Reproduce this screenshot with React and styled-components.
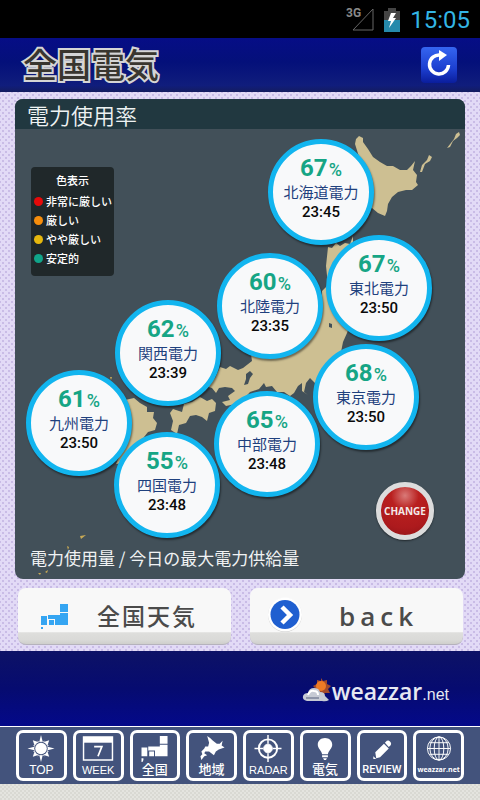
import React from "react";
import styled, { createGlobalStyle } from "styled-components";

const GlobalStyle = createGlobalStyle`
  * { box-sizing: border-box; }
  body {
    margin: 0;
    background: repeating-conic-gradient(#d9d9d3 0 25%, #e4e4df 0 50%) 0 0 / 4px 4px;
    font-family: "Noto Sans CJK JP", sans-serif;
  }
  button { font: inherit; padding: 0; border: 0; cursor: pointer; }
`;

const StatusBar = styled.div`
  display: flex;
  align-items: center;
  justify-content: flex-end;
  height: 38px;
  padding: 2px 10px 0 0;
  background: #000;
  color: #33b5e5;
  font: 24px/36px Roboto, sans-serif;
`;

const SignalIcon = styled.svg`
  width: 28px;
  height: 26px;
  margin-right: 10px;
`;

const BatteryIcon = styled.svg`
  width: 16px;
  height: 24px;
  margin-right: 10px;
`;

const Header = styled.header`
  display: flex;
  align-items: center;
  justify-content: space-between;
  height: 54px;
  padding: 0 23px;
  background: linear-gradient(#060d86, #04107a 45%, #101d7c 88%, #131c60);
`;

const Title = styled.h1`
  margin: 0;
  padding-bottom: 2px;
  color: #39362f;
  font-size: 34px;
  font-weight: 500;
  line-height: 50px;
  -webkit-text-stroke: 4px #d5d5d5;
  paint-order: stroke fill;
`;

const RefreshButton = styled.button`
  width: 36px;
  height: 36px;
  border-radius: 4px;
  background: linear-gradient(#3565f0, #1c3fd0 60%, #0a1d9c);
  svg { display: block; }
`;

const Main = styled.main`
  padding: 7px 15px 6px;
  background:
    radial-gradient(circle, #c9bce6 1px, transparent 1px) 0 0 / 6px 6px,
    radial-gradient(circle, #c9bce6 1px, transparent 1px) 3px 3px / 6px 6px,
    #e2daf6;
`;

const Card = styled.section`
  overflow: hidden;
  border-radius: 8px;
  background: #425059;
`;

const CardTitle = styled.h2`
  margin: 0;
  padding-left: 12px;
  background: #213840;
  color: #eef2f2;
  font-size: 22px;
  font-weight: 350;
  line-height: 30px;
`;

const MapArea = styled.div`
  position: relative;
  height: 450px;
`;

const MapSvg = styled.svg`
  display: block;
  width: 100%;
  height: 100%;
`;

const Legend = styled.div`
  position: absolute;
  left: 16px;
  top: 38px;
  width: 83px;
  height: 109px;
  padding: 4px 3px;
  border-radius: 4px;
  background: #20282a;
  color: #fff;
  font-size: 11px;
  font-weight: 500;
  line-height: 19px;
`;

const LegendTitle = styled.div`
  margin-bottom: 2px;
  text-align: center;
`;

const LegendItem = styled.div`
  display: flex;
  align-items: center;
  gap: 3px;
  white-space: nowrap;
  &::before {
    content: "";
    width: 9px;
    height: 9px;
    flex: none;
    border-radius: 50%;
    background: ${(p) => p.$color};
  }
`;

const Pin = styled.button`
  position: absolute;
  left: ${(p) => (p.$x / 450) * 100}%;
  top: ${(p) => p.$y}px;
  display: flex;
  flex-direction: column;
  align-items: center;
  width: 106px;
  height: 106px;
  margin: -53px;
  && { border: 5px solid #12b5ef; }
  border-radius: 50%;
  background: #f8f9fa;
  box-shadow: 1px 2px 2px rgba(0, 0, 0, 0.45);
`;

const PinRate = styled.span`
  margin-top: 12px;
  color: #16a585;
  font: bold 24px/24px Roboto, sans-serif;
  small {
    margin-left: 1px;
    font-size: 18px;
    font-weight: 500;
  }
`;

const PinName = styled.span`
  color: #1f417e;
  font-size: 15px;
  line-height: 20px;
  white-space: nowrap;
`;

const PinTime = styled.span`
  color: #0a0a0a;
  font: 500 15px/20px Roboto, sans-serif;
`;

const ChangeButton = styled.button`
  position: absolute;
  right: 31px;
  top: 353px;
  width: 58px;
  height: 58px;
  && { border: 5px solid #dcdcdc; }
  border-radius: 50%;
  background: radial-gradient(circle at 50% 18%, #d97a78, #b9201f 30%, #ad1a1d 70%, #8e1417);
  color: #f3e9e9;
  && { font: bold 10px/48px "Open Sans", sans-serif; }
  box-shadow: 0 1px 2px rgba(0, 0, 0, 0.5);
  display: flex;
  justify-content: center;
`;

const Caption = styled.p`
  position: absolute;
  left: 15px;
  bottom: 9px;
  margin: 0;
  color: #f0f2f3;
  font-size: 17px;
  line-height: 24px;
  white-space: nowrap;
`;

const ButtonRow = styled.div`
  display: grid;
  grid-template-columns: 1fr 1fr;
  gap: 19px;
  padding: 9px 2px 0 3px;
`;

const WideButton = styled.button`
  display: flex;
  align-items: center;
  height: 57px;
  padding: 0 0 2px ${(p) => p.$pad}px;
  && { border-bottom: 1px solid #b5b2bc; }
  border-radius: 8px;
  background: linear-gradient(#f8f8f8 78%, #dededc 80%, #dadad8 92%, #cfcfcc);
  color: #4b4b4b;
`;

const WeatherLabel = styled.span`
  margin-left: 28px;
  font-size: 23px;
  font-weight: 500;
  letter-spacing: 2px;
`;

const BackLabel = styled.span`
  margin-left: 36px;
  font: 600 26px/40px "Open Sans", sans-serif;
  letter-spacing: 5px;
  padding-top: 2px;
`;

const Footer = styled.footer`
  display: flex;
  justify-content: flex-end;
  align-items: center;
  height: 76px;
  padding: 4px 31px 0 0;
  border-bottom: 1px solid #fff;
  background: linear-gradient(#0d1266, #060b70 50%, #04098a);
`;

const Brand = styled.a`
  display: flex;
  align-items: center;
  gap: 1px;
  color: #e6e8f2;
  font: 600 23px/30px "Open Sans", sans-serif;
  text-decoration: none;
  small { font: 16px "Liberation Sans", sans-serif; }
`;

const Nav = styled.nav`
  display: grid;
  grid-template-columns: repeat(8, 1fr);
  gap: 6px;
  height: 57px;
  padding: 3px 16px;
  background: #43537c;
`;

const NavButton = styled.button`
  display: flex;
  flex-direction: column;
  align-items: center;
  justify-content: space-between;
  min-width: 0;
  height: 51px;
  && { border: 3px solid #fff; }
  border-radius: 7px;
  background: transparent;
  color: #fff;
  svg { display: block; margin-top: 2px; }
`;

const NavLabel = styled.span`
  font: ${(p) => p.$weight || 400} ${(p) => p.$size || 11}px/16px ${(p) => p.$family || '"Liberation Sans", "Noto Sans CJK JP"'}, sans-serif;
  white-space: nowrap;
`;

const pins = [
  { name: "九州電力", rate: 61, time: "23:50", x: 64, y: 294 },
  { name: "関西電力", rate: 62, time: "23:39", x: 153, y: 224 },
  { name: "四国電力", rate: 55, time: "23:48", x: 152, y: 356 },
  { name: "北陸電力", rate: 60, time: "23:35", x: 255, y: 177 },
  { name: "中部電力", rate: 65, time: "23:48", x: 252, y: 315 },
  { name: "北海道電力", rate: 67, time: "23:45", x: 306, y: 63 },
  { name: "東北電力", rate: 67, time: "23:50", x: 364, y: 159 },
  { name: "東京電力", rate: 68, time: "23:50", x: 351, y: 268 },
];

const legend = [
  ["非常に厳しい", "#e60a0a"],
  ["厳しい", "#f78e0c"],
  ["やや厳しい", "#e6b80e"],
  ["安定的", "#10a58a"],
];

const JapanMap = () => (
  <MapSvg viewBox="15 129 450 450" preserveAspectRatio="none" aria-hidden="true">
    <g fill="#cdbf92">
      <path d="M355 144L356 139 359 136 363 138 363 142 368 149 373 157 380 162 387 166 393 166 400 170 407 170 411 166 415 161 413 170 417 175 416 182 418 185 412 190 406 190 398 192 392 197 388 204 387 211 385 216 378 213 372 208 360 205 355 180 360 160Z" />
      <path d="M420 172L422 165 427 160 429 155 432 157 430 161 425 164 422 172ZM447 148L454 139 456 134 459 132 460 135 457 138 453 141 450 147Z" />
      <path d="M328 247L332 248 336 243 340 246 345 243 350 244 353 236 353 255 370 280 350 325 347 333 343 342 341 352 330 376 316 384 310 378 306 383 304 392 308 395 302 391 302 383 298 386 294 393 290 396 284 392 277 392 272 386 266 387 264 383 259 389 250 392 240 403 226 406 222 402 230 400 228 396 235 391 232 388 225 387 219 388 216 393 212 388 205 386 190 390 170 394 150 400 160 388 200 388 215 378 220 367 226 369 230 366 238 370 243 368 252 361 251 354 290 335 315 320 322 300 322 291 328 285 326 266Z" />
      <path d="M170 413L173 409 182 412 184 404 192 402 200 397 207 401 212 399 216 403 215 411 209 413 207 421 202 417 196 415 190 416 186 423 179 425 177 434 171 430 173 421Z" />
      <path d="M125 400L134 398 140 403 147 407 147 412 154 412 153 418 157 423 155 430 148 432 144 437 138 450 122 463 116 464 123 448Z" />
    </g>
    <path d="M246 374L250 371 253 374 250 378 248 384 244 385 246 379ZM329 323L332 324 332 328 329 327Z" fill="#425059" />
    <path d="M80 536L86 535 81 539ZM67 546L69 547 68 550ZM38 573L41 573 40 575ZM45 572L48 570 47 573ZM110 377L112 377 111 380Z" fill="#c9aa55" />
  </MapSvg>
);

const JapanBlocks = ({ color = "#fff", top = -1 }) => (
  <svg width="28" height="28" viewBox={`0 ${top} 28 28`} fill={color}>
    <path d="M19 0h8v8h-8zM19 9h8v12H14v-6H7v-4h12zM8 16h5v5H8zM0 12h6v9H0zM0 23h2v2l-1 2H0z" />
  </svg>
);

const SunIcon = () => (
  <svg width="28" height="28" viewBox="-14 -14 28 28" fill="#fff">
    {Array.from({ length: 16 }, (_, i) => (
      <path key={i} d={i % 4 === 0 ? "M-2-6L0-14 2-6z" : i % 2 === 0 ? "M-3-6L0-12 3-6z" : "M-1-6L0-9 1-6z"} transform={`rotate(${i * 22.5})`} />
    ))}
    <circle r="7" fill="#43537c" />
    <circle r="6" />
  </svg>
);

const CalendarIcon = () => (
  <svg width="32" height="28" viewBox="0 0 32 28">
    <path d="M1 2h30v24H1z" fill="none" stroke="#fff" strokeWidth="1.500" />
    <path d="M1 2h30v6H1z" fill="#fff" />
    <path d="M12 12h8l-4 10" fill="none" stroke="#fff" strokeWidth="1.800" />
  </svg>
);

const HokkaidoIcon = () => (
  <svg width="28" height="28" viewBox="0 0 28 28" fill="#fff">
    <path d="M9 1L12 3 15 6 19 9 22 9 25 6 24 11 27 13 21 15 18 17 16 21 11 17 7 17 6 19 9 21 6 22 3 26 2 22 4 20 3 17 6 14 7 12 10 12 11 8Z" />
  </svg>
);

const RadarIcon = () => (
  <svg width="28" height="28" viewBox="-14 -14 28 28" fill="none" stroke="#fff">
    <circle r="9.500" strokeWidth="2" />
    <path d="M-14 0h9M14 0h-9M0-14v9M0 14v-9" strokeWidth="1.500" />
    <circle r="4.500" fill="#fff" />
  </svg>
);

const BulbIcon = () => (
  <svg width="28" height="28" viewBox="0 0 28 28" fill="#fff">
    <path d="M14 3c-4.500 0-7.500 3-7.500 7 0 4 4 6 4.500 10h6c.5-4 4.500-6 4.500-10 0-4-3-7-7.500-7zM11 21h6v2h-6zM12 24h4l-1 2h-2z" />
  </svg>
);

const PencilIcon = () => (
  <svg width="28" height="28" viewBox="0 0 28 28" fill="#fff">
    <path d="M7 18L16 9l5 5-9 9-4 1zM17 8l2-2q2-1 3 .5l1 1q1 1.500 0 3l-2 2zM5 22l3 3H5z" />
  </svg>
);

const GlobeIcon = () => (
  <svg width="28" height="28" viewBox="-14 -14 28 28" fill="none" stroke="#fff" strokeWidth="1">
    <circle r="12" />
    <ellipse rx="5" ry="12" />
    <ellipse rx="9.500" ry="12" />
    <path d="M0-12v24M-12 0h24M-10-6h20M-10 6h20" />
  </svg>
);

const CloudSunIcon = () => (
  <svg width="29" height="26" viewBox="0 0 29 26">
    <path d="M19 0l2 3 4-1 0 4 4 2-3 3 2 4-5 0-3 3-3-3-5 0 2-4-3-3 4-2 0-4 4 1z" fill="#a34b2b" />
    <circle cx="19" cy="8" r="5" fill="#ee7b25" />
    <path d="M5 23q-5-1-4-5 1-3 5-3 1-5 6-5 5 0 6 4 5 0 5 4l4 4q-3 2-7 1z" fill="#c6cad4" />
    <path d="M6 17q2-5 6-4 4 0 4 4" fill="none" stroke="#fff" strokeWidth="2" />
    <path d="M4 20h13" stroke="#8d94a8" strokeWidth="2" />
  </svg>
);

const navItems = [
  { label: "TOP", icon: <SunIcon />, size: 12 },
  { label: "WEEK", icon: <CalendarIcon />, size: 11 },
  { label: "全国", icon: <JapanBlocks />, size: 13, weight: 500 },
  { label: "地域", icon: <HokkaidoIcon />, size: 13, weight: 500 },
  { label: "RADAR", icon: <RadarIcon />, size: 11 },
  { label: "電気", icon: <BulbIcon />, size: 13, weight: 500 },
  { label: "REVIEW", icon: <PencilIcon />, size: 11, weight: 500, family: "Roboto" },
  { label: "weazzar.net", icon: <GlobeIcon />, size: 7, weight: 700, family: '"Open Sans"' },
];

export default function App() {
  return (
    <>
      <GlobalStyle />
      <StatusBar>
        <SignalIcon viewBox="0 0 28 26">
          <text x="0" y="10" fill="#8a8a8a" fontSize="12" fontWeight="700" fontFamily="Roboto, sans-serif">3G</text>
          <path d="M7 23h20V2z" fill="none" stroke="#666" />
        </SignalIcon>
        <BatteryIcon viewBox="0 0 16 24">
          <path d="M0 3h4V0h8v3h4v9H0z" fill="#444" />
          <path d="M0 12h16v12H0z" fill="#268aac" />
          <path d="M7 5h5L9 10h3L5 20l2-7H4z" fill="#fff" />
        </BatteryIcon>
        <time>15:05</time>
      </StatusBar>
      <Header>
        <Title>全国電気</Title>
        <RefreshButton aria-label="更新">
          <svg width="36" height="36" viewBox="0 0 36 36">
            <path d="M19 8a9.500 9.500 0 1 0 8.500 10" fill="none" stroke="#fff" strokeWidth="3.500" />
            <path d="M18 3l8 5-8 6z" fill="#fff" />
          </svg>
        </RefreshButton>
      </Header>
      <Main>
        <Card>
          <CardTitle>電力使用率</CardTitle>
          <MapArea>
            <JapanMap />
            <Legend>
              <LegendTitle>色表示</LegendTitle>
              {legend.map(([label, color]) => (
                <LegendItem key={label} $color={color}>{label}</LegendItem>
              ))}
            </Legend>
            {pins.map((p) => (
              <Pin key={p.name} $x={p.x} $y={p.y}>
                <PinRate>{p.rate}<small>%</small></PinRate>
                <PinName>{p.name}</PinName>
                <PinTime>{p.time}</PinTime>
              </Pin>
            ))}
            <ChangeButton>CHANGE</ChangeButton>
            <Caption>電力使用量 / 今日の最大電力供給量</Caption>
          </MapArea>
        </Card>
        <ButtonRow>
          <WideButton $pad={23}>
            <JapanBlocks color="#35a5f2" top={-3} />
            <WeatherLabel>全国天気</WeatherLabel>
          </WideButton>
          <WideButton $pad={17}>
            <svg width="36" height="36" viewBox="0 0 36 36">
              <circle cx="18" cy="18" r="17" fill="#c9c9c9" />
              <circle cx="18" cy="17.500" r="17" fill="#fff" />
              <circle cx="18" cy="17.500" r="14.500" fill="#1f5fd0" />
              <path d="M15 10l8 8-8 8" fill="none" stroke="#fff" strokeWidth="4.500" />
            </svg>
            <BackLabel>back</BackLabel>
          </WideButton>
        </ButtonRow>
      </Main>
      <Footer>
        <Brand href="#top">
          <CloudSunIcon />
          <span>weazzar<small>.net</small></span>
        </Brand>
      </Footer>
      <Nav>
        {navItems.map((n) => (
          <NavButton key={n.label}>
            {n.icon}
            <NavLabel $size={n.size} $weight={n.weight} $family={n.family}>{n.label}</NavLabel>
          </NavButton>
        ))}
      </Nav>
    </>
  );
}
